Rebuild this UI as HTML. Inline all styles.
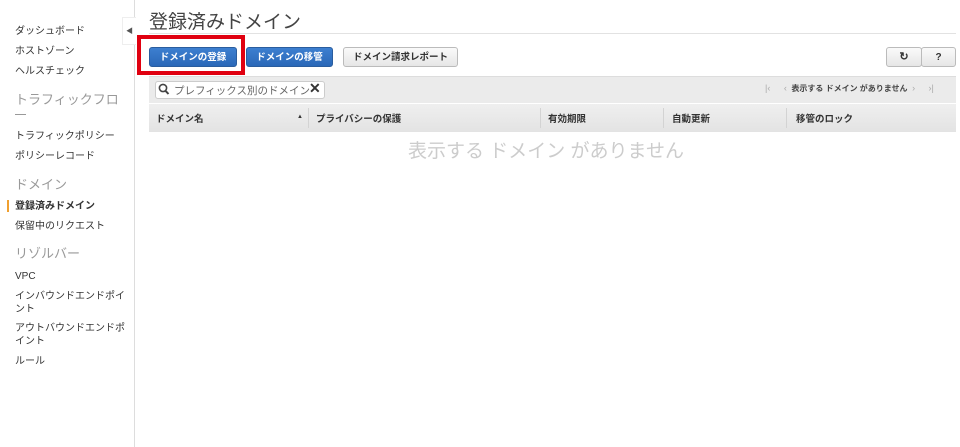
<!DOCTYPE html>
<html><head><meta charset="utf-8"><style>
*{box-sizing:border-box;margin:0;padding:0}
body{width:960px;height:447px;background:#fff;font-family:"Liberation Sans","Noto Sans CJK JP",sans-serif;color:#333;position:relative;overflow:hidden}
.side{position:absolute;left:0;top:0;width:135px;height:447px;border-right:1px solid #ddd}
.side div{position:absolute;left:15px;font-size:10px;color:#333;line-height:13px;width:112px}
.side .h{font-size:13px;color:#999;line-height:18px}
.tab{position:absolute;left:122px;top:17px;width:14px;height:28px;background:#fff;border:1px solid #eee;border-right:none;font-size:7px;color:#555;padding:8px 0 0 3px}
.title{position:absolute;left:149px;top:7px;font-size:19px;color:#444}
.hr{position:absolute;left:149px;right:4px;top:33px;border-top:1px solid #e2e2e2}
.btn{position:absolute;top:47px;height:20px;font-size:9.5px;font-weight:bold;text-align:center;line-height:19px;border-radius:3px}
.blue{background:linear-gradient(#3d7fd0,#2a68b8);color:#fff;border:1px solid #2a5d9e}
.grey{background:linear-gradient(#fafafa,#e6e6e6);color:#333;border:1px solid #bbb}
.red{position:absolute;left:137px;top:35px;width:108px;height:40px;border:4px solid #e00010}
.bar{position:absolute;left:149px;right:4px;top:76px;height:27px;background:#ebebeb;border-top:1px solid #ddd}
.search{position:absolute;left:155px;top:81px;width:170px;height:18px;background:#fff;border:1px solid #ccc;border-radius:3px;font-size:10.5px;color:#666;padding:1px 0 0 18px;white-space:nowrap;overflow:hidden}
.thead{position:absolute;left:149px;right:4px;top:104px;height:28px;background:linear-gradient(#efefef,#e3e3e3);font-size:9.5px;font-weight:bold}
.thead span{position:absolute;top:7px}
.sep{position:absolute;top:4px;height:20px;border-left:1px solid #d3d3d3}
</style></head><body>
<div class="side">
<div style="top:25px">ダッシュボード</div>
<div style="top:45px">ホストゾーン</div>
<div style="top:65px">ヘルスチェック</div>
<div class="h" style="top:91px">トラフィックフロ</div>
<div style="top:114px;width:11px;height:1px;background:#999"></div>
<div style="top:130px">トラフィックポリシー</div>
<div style="top:150px">ポリシーレコード</div>
<div class="h" style="top:176px">ドメイン</div>
<div style="top:200px;font-weight:bold">登録済みドメイン</div>
<div style="top:220px">保留中のリクエスト</div>
<div class="h" style="top:245px">リゾルバー</div>
<div style="top:270px">VPC</div>
<div style="top:290px">インバウンドエンドポイント</div>
<div style="top:322px">アウトバウンドエンドポイント</div>
<div style="top:355px">ルール</div>
</div>
<div style="position:absolute;left:7px;top:200px;width:2px;height:12px;background:#f0a030"></div>
<div class="tab">◀</div>
<div class="title">登録済みドメイン</div>
<div class="hr"></div>
<div class="btn blue" style="left:149px;width:88px">ドメインの登録</div>
<div class="btn blue" style="left:246px;width:87px">ドメインの移管</div>
<div class="btn grey" style="left:343px;width:115px">ドメイン請求レポート</div>
<div class="red"></div>
<div class="btn grey" style="left:886px;width:36px;font-size:11px">↻</div>
<div class="btn grey" style="left:921px;width:35px;font-size:10px">?</div>
<div class="bar"></div>
<div class="search">プレフィックス別のドメイン</div>
<svg style="position:absolute;left:158px;top:83px" width="12" height="13" viewBox="0 0 12 13"><circle cx="5" cy="5" r="3.6" fill="none" stroke="#444" stroke-width="1.6"/><path d="M7.5 7.8L10.5 11" stroke="#444" stroke-width="2"/></svg>
<div style="position:absolute;left:309px;top:80px;font-size:14px;font-weight:bold;color:#333">✕</div>
<div style="position:absolute;left:765px;top:83px;font-size:9px;color:#aaa;white-space:nowrap;word-spacing:2px">|‹ &nbsp; ‹ <b style="color:#444;font-size:8px;word-spacing:0">表示する ドメイン がありません</b> › &nbsp; ›|</div>
<div class="thead">
<span style="left:7px">ドメイン名</span><span style="left:148px;font-size:6px;top:10px">▲</span>
<div class="sep" style="left:159px"></div><span style="left:167px">プライバシーの保護</span>
<div class="sep" style="left:391px"></div><span style="left:399px">有効期限</span>
<div class="sep" style="left:514px"></div><span style="left:523px">自動更新</span>
<div class="sep" style="left:637px"></div><span style="left:647px">移管のロック</span>
</div>
<div style="position:absolute;left:408px;top:136px;font-size:19px;color:#ccc">表示する ドメイン がありません</div>
</body></html>
